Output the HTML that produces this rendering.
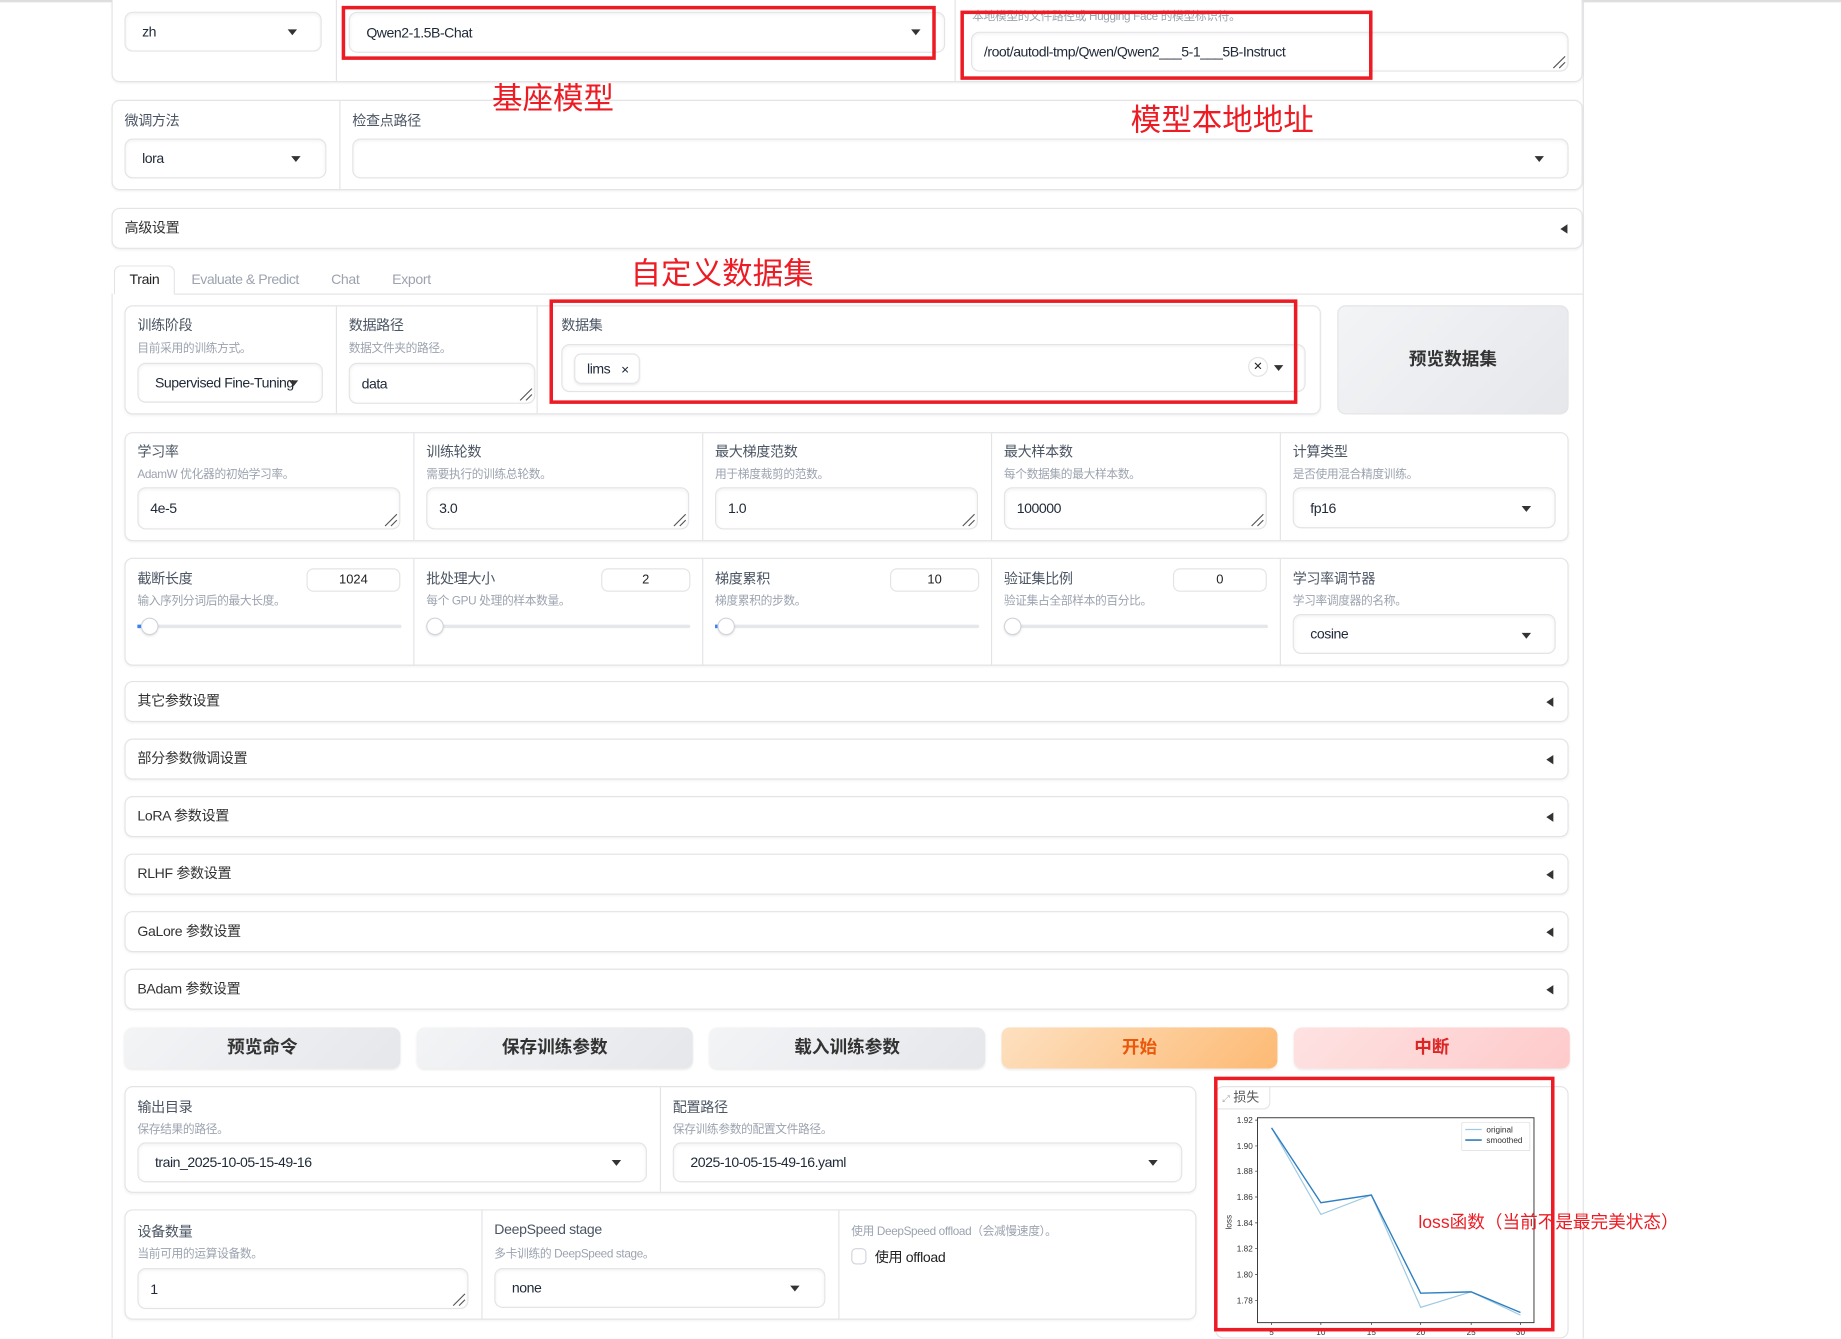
<!DOCTYPE html>
<html><head><meta charset="utf-8">
<style>
*{box-sizing:border-box;margin:0;padding:0}
html,body{width:1841px;height:1338px;overflow:hidden;background:#fff}
#w{position:absolute;left:0;top:0;width:1568px;height:1140px;transform:scale(1.17411);transform-origin:0 0;font-family:"Liberation Sans","Noto Sans CJK SC",sans-serif;color:#222}
.a{position:absolute}
.box{position:absolute;border:1px solid #e4e4e7;border-radius:7px;background:#fff;box-shadow:0 1px 2px rgba(0,0,0,.05)}
.inp{position:absolute;border:1px solid #e4e4e7;border-radius:7px;background:#fff;box-shadow:inset 0 1px 3px rgba(0,0,0,.06);font-size:12px;color:#1f2937;padding-left:14px;display:flex;align-items:center;letter-spacing:-0.4px;white-space:nowrap;overflow:hidden}
.vs{position:absolute;width:1px;background:#e4e4e7}
.lb{position:absolute;font-size:12px;color:#4b5563;white-space:nowrap;letter-spacing:-0.3px}
.sb{position:absolute;font-size:10px;color:#9ca3af;white-space:nowrap;letter-spacing:-0.3px}
.dd{position:absolute;width:0;height:0;border-left:4px solid transparent;border-right:4px solid transparent;border-top:5px solid #333}
.grip{position:absolute;width:12px;height:12px}
.acc{position:absolute;left:106px;width:1230px;height:35px;border:1px solid #e4e4e7;border-radius:7px;background:#fff;box-shadow:0 1px 2px rgba(0,0,0,.05);font-size:12px;color:#333;padding-left:10px;line-height:33px;letter-spacing:-0.3px}
.acc:after{content:"";position:absolute;right:12px;top:13px;border-top:4px solid transparent;border-bottom:4px solid transparent;border-right:6px solid #333}
.btn{position:absolute;top:875px;height:35px;width:235px;border-radius:7px;background:linear-gradient(135deg,#f3f4f6,#e5e7eb);box-shadow:0 1px 2px rgba(0,0,0,.08);font-size:15px;font-weight:bold;color:#333;text-align:center;line-height:35px}
.num{position:absolute;height:20px;width:80px;border:1px solid #e4e4e7;border-radius:6px;font-size:11px;text-align:center;line-height:18px;color:#222}
.tr{position:absolute;height:3px;background:#e5e7eb;border-radius:2px}
.th{position:absolute;width:15px;height:15px;border-radius:50%;background:#fff;border:1px solid #d1d5db;box-shadow:0 1px 2px rgba(0,0,0,.1)}
.red{position:absolute;border:3px solid #ed1c24}
.rt{position:absolute;color:#ed1c24;white-space:nowrap}
</style></head><body><div id="w">
<div class="a" style="left:0;top:0;width:1568px;height:2px;background:#dedede"></div>
<div class="vs" style="left:1348px;top:0;height:1140px"></div>
<div class="vs" style="left:95px;top:250px;height:890px"></div>

<div class="box" style="left:95px;top:-10px;width:1253px;height:80px"></div>
<div class="vs" style="left:286px;top:0;height:70px"></div>
<div class="vs" style="left:813px;top:0;height:70px"></div>
<div class="inp" style="left:106px;top:10px;width:168px;height:34px">zh</div><div class="dd" style="left:245px;top:25px"></div>
<div class="inp" style="left:297px;top:10px;width:508px;height:35px">Qwen2-1.5B-Chat</div><div class="dd" style="left:776px;top:25px"></div>
<div class="sb" style="left:828px;top:5px">本地模型的文件路径或 Hugging Face 的模型标识符。</div>
<div class="inp" style="left:827px;top:27px;width:509px;height:34px;padding-left:10px">/root/autodl-tmp/Qwen/Qwen2___5-1___5B-Instruct</div>
<svg class="grip" style="left:1322px;top:47px" viewBox="0 0 12 12"><path d="M1 11L11 1M6 11L11 6" stroke="#555" stroke-width="1"/></svg>

<div class="box" style="left:95px;top:85px;width:1253px;height:77px"></div>
<div class="vs" style="left:289px;top:86px;height:75px"></div>
<div class="lb" style="left:106px;top:94px">微调方法</div>
<div class="inp" style="left:106px;top:118px;width:172px;height:34px">lora</div><div class="dd" style="left:248px;top:133px"></div>
<div class="lb" style="left:300px;top:94px">检查点路径</div>
<div class="inp" style="left:300px;top:118px;width:1036px;height:34px"></div><div class="dd" style="left:1307px;top:133px"></div>

<div class="acc" style="left:95px;top:177px;width:1253px">高级设置</div>

<div class="a" style="left:97px;top:226px;width:52px;height:25px;border:1px solid #e4e4e7;border-bottom:1px solid #fff;border-radius:6px 6px 0 0;background:#fff;font-size:12px;text-align:center;line-height:23px;z-index:2;letter-spacing:-0.3px">Train</div>
<div class="a" style="left:148px;top:250px;width:1200px;height:1px;background:#e4e4e7"></div>
<div class="a" style="left:163px;top:231px;font-size:12px;color:#9ca3af;letter-spacing:-0.4px">Evaluate &amp; Predict</div>
<div class="a" style="left:282px;top:231px;font-size:12px;color:#9ca3af;letter-spacing:-0.3px">Chat</div>
<div class="a" style="left:334px;top:231px;font-size:12px;color:#9ca3af;letter-spacing:-0.3px">Export</div>

<div class="box" style="left:106px;top:260px;width:1019px;height:93px"></div>
<div class="vs" style="left:286px;top:261px;height:91px"></div>
<div class="vs" style="left:457px;top:261px;height:91px"></div>
<div class="lb" style="left:117px;top:268px">训练阶段</div><div class="sb" style="left:117px;top:288px">目前采用的训练方式。</div>
<div class="inp" style="left:117px;top:309px;width:158px;height:34px">Supervised Fine-Tuning</div><div class="dd" style="left:246px;top:324px"></div>
<div class="lb" style="left:297px;top:268px">数据路径</div><div class="sb" style="left:297px;top:288px">数据文件夹的路径。</div>
<div class="inp" style="left:297px;top:309px;width:159px;height:35px;padding-left:10px">data</div>
<svg class="grip" style="left:442px;top:330px" viewBox="0 0 12 12"><path d="M1 11L11 1M6 11L11 6" stroke="#555"/></svg>
<div class="lb" style="left:478px;top:268px">数据集</div>
<div class="inp" style="left:478px;top:293px;width:634px;height:41px;padding-left:10px"><span style="border:1px solid #e4e4e7;border-radius:6px;padding:5px 8px 5px 10px;box-shadow:0 1px 2px rgba(0,0,0,.08)">lims <span style="font-size:9px;margin-left:6px">✕</span></span></div>
<div class="a" style="left:1063px;top:304px;width:17px;height:17px;border:1px solid #e4e4e7;border-radius:50%;font-size:10px;text-align:center;line-height:15px">✕</div>
<div class="dd" style="left:1085px;top:311px"></div>
<div class="a" style="left:1139px;top:260px;width:197px;height:93px;border-radius:7px;background:linear-gradient(135deg,#f3f4f6,#e5e7eb);border:1px solid #e4e4e7;font-size:15px;font-weight:bold;color:#333;text-align:center;line-height:91px">预览数据集</div>

<div class="box" style="left:106px;top:368px;width:1230px;height:93px"></div>
<div class="vs" style="left:352px;top:369px;height:91px"></div><div class="vs" style="left:598px;top:369px;height:91px"></div><div class="vs" style="left:844px;top:369px;height:91px"></div><div class="vs" style="left:1090px;top:369px;height:91px"></div>
<div class="lb" style="left:117px;top:376px">学习率</div><div class="sb" style="left:117px;top:395px">AdamW 优化器的初始学习率。</div>
<div class="inp" style="left:117px;top:415px;width:224px;height:36px;padding-left:10px">4e-5</div>
<div class="lb" style="left:363px;top:376px">训练轮数</div><div class="sb" style="left:363px;top:395px">需要执行的训练总轮数。</div>
<div class="inp" style="left:363px;top:415px;width:224px;height:36px;padding-left:10px">3.0</div>
<div class="lb" style="left:609px;top:376px">最大梯度范数</div><div class="sb" style="left:609px;top:395px">用于梯度裁剪的范数。</div>
<div class="inp" style="left:609px;top:415px;width:224px;height:36px;padding-left:10px">1.0</div>
<div class="lb" style="left:855px;top:376px">最大样本数</div><div class="sb" style="left:855px;top:395px">每个数据集的最大样本数。</div>
<div class="inp" style="left:855px;top:415px;width:224px;height:36px;padding-left:10px">100000</div>
<svg class="grip" style="left:327px;top:437px" viewBox="0 0 12 12"><path d="M1 11L11 1M6 11L11 6" stroke="#555"/></svg>
<svg class="grip" style="left:573px;top:437px" viewBox="0 0 12 12"><path d="M1 11L11 1M6 11L11 6" stroke="#555"/></svg>
<svg class="grip" style="left:819px;top:437px" viewBox="0 0 12 12"><path d="M1 11L11 1M6 11L11 6" stroke="#555"/></svg>
<svg class="grip" style="left:1065px;top:437px" viewBox="0 0 12 12"><path d="M1 11L11 1M6 11L11 6" stroke="#555"/></svg>
<div class="lb" style="left:1101px;top:376px">计算类型</div><div class="sb" style="left:1101px;top:395px">是否使用混合精度训练。</div>
<div class="inp" style="left:1101px;top:415px;width:224px;height:35px">fp16</div><div class="dd" style="left:1296px;top:431px"></div>

<div class="box" style="left:106px;top:475px;width:1230px;height:92px"></div>
<div class="vs" style="left:352px;top:476px;height:90px"></div><div class="vs" style="left:598px;top:476px;height:90px"></div><div class="vs" style="left:844px;top:476px;height:90px"></div><div class="vs" style="left:1090px;top:476px;height:90px"></div>
<div class="lb" style="left:117px;top:484px">截断长度</div><div class="num" style="left:261px;top:484px">1024</div><div class="sb" style="left:117px;top:503px">输入序列分词后的最大长度。</div>
<div class="tr" style="left:117px;top:532px;width:225px"></div><div class="a" style="left:117px;top:532px;width:5px;height:3px;background:#3b82f6"></div><div class="th" style="left:120px;top:526px"></div>
<div class="lb" style="left:363px;top:484px">批处理大小</div><div class="num" style="left:512px;top:484px;width:76px">2</div><div class="sb" style="left:363px;top:503px">每个 GPU 处理的样本数量。</div>
<div class="tr" style="left:363px;top:532px;width:225px"></div><div class="th" style="left:363px;top:526px"></div>
<div class="lb" style="left:609px;top:484px">梯度累积</div><div class="num" style="left:758px;top:484px;width:76px">10</div><div class="sb" style="left:609px;top:503px">梯度累积的步数。</div>
<div class="tr" style="left:609px;top:532px;width:225px"></div><div class="a" style="left:609px;top:532px;width:4px;height:3px;background:#3b82f6"></div><div class="th" style="left:611px;top:526px"></div>
<div class="lb" style="left:855px;top:484px">验证集比例</div><div class="num" style="left:999px;top:484px">0</div><div class="sb" style="left:855px;top:503px">验证集占全部样本的百分比。</div>
<div class="tr" style="left:855px;top:532px;width:225px"></div><div class="th" style="left:855px;top:526px"></div>
<div class="lb" style="left:1101px;top:484px">学习率调节器</div><div class="sb" style="left:1101px;top:503px">学习率调度器的名称。</div>
<div class="inp" style="left:1101px;top:523px;width:224px;height:34px">cosine</div><div class="dd" style="left:1296px;top:539px"></div>

<div class="acc" style="top:580px">其它参数设置</div>
<div class="acc" style="top:629px">部分参数微调设置</div>
<div class="acc" style="top:678px">LoRA 参数设置</div>
<div class="acc" style="top:727px">RLHF 参数设置</div>
<div class="acc" style="top:776px">GaLore 参数设置</div>
<div class="acc" style="top:825px">BAdam 参数设置</div>

<div class="btn" style="left:106px">预览命令</div>
<div class="btn" style="left:355px">保存训练参数</div>
<div class="btn" style="left:604px">载入训练参数</div>
<div class="btn" style="left:853px;background:linear-gradient(135deg,#fde0c0,#fdba74);color:#ea580c">开始</div>
<div class="btn" style="left:1102px;background:linear-gradient(135deg,#fee2e2,#fecaca);color:#dc2626">中断</div>

<div class="box" style="left:106px;top:925px;width:913px;height:91px"></div>
<div class="vs" style="left:562px;top:926px;height:89px"></div>
<div class="lb" style="left:117px;top:934px">输出目录</div><div class="sb" style="left:117px;top:953px">保存结果的路径。</div>
<div class="inp" style="left:117px;top:973px;width:434px;height:34px">train_2025-10-05-15-49-16</div><div class="dd" style="left:521px;top:988px"></div>
<div class="lb" style="left:573px;top:934px">配置路径</div><div class="sb" style="left:573px;top:953px">保存训练参数的配置文件路径。</div>
<div class="inp" style="left:573px;top:973px;width:434px;height:34px">2025-10-05-15-49-16.yaml</div><div class="dd" style="left:978px;top:988px"></div>

<div class="box" style="left:106px;top:1030px;width:913px;height:94px"></div>
<div class="vs" style="left:410px;top:1031px;height:92px"></div><div class="vs" style="left:714px;top:1031px;height:92px"></div>
<div class="lb" style="left:117px;top:1040px">设备数量</div><div class="sb" style="left:117px;top:1059px">当前可用的运算设备数。</div>
<div class="inp" style="left:117px;top:1080px;width:282px;height:35px;padding-left:10px">1</div>
<svg class="grip" style="left:385px;top:1101px" viewBox="0 0 12 12"><path d="M1 11L11 1M6 11L11 6" stroke="#555"/></svg>
<div class="lb" style="left:421px;top:1040px">DeepSpeed stage</div><div class="sb" style="left:421px;top:1059px">多卡训练的 DeepSpeed stage。</div>
<div class="inp" style="left:421px;top:1080px;width:282px;height:34px">none</div><div class="dd" style="left:673px;top:1095px"></div>
<div class="sb" style="left:725px;top:1040px">使用 DeepSpeed offload（会减慢速度）。</div>
<div class="a" style="left:725px;top:1063px;width:13px;height:14px;border:1px solid #d1d5db;border-radius:4px"></div>
<div class="a" style="left:745px;top:1062px;font-size:12px;color:#222;letter-spacing:-0.3px">使用 offload</div>

<div class="box" style="left:1035px;top:925px;width:301px;height:215px;box-shadow:none"></div>
<div class="a" style="left:1036px;top:925px;width:46px;height:20px;border-right:1px solid #e4e4e7;border-bottom:1px solid #e4e4e7;border-radius:0 0 6px 0;font-size:11px;color:#555;line-height:20px;padding-left:5px"><span style="font-size:8px;color:#aaa">⤢</span> 损失</div>
<svg class="a" style="left:1035px;top:945px" width="300" height="195" viewBox="1035 945 300 195">
<rect x="1071" y="952" width="235.5" height="174.5" fill="none" stroke="#333" stroke-width="0.8"/>
<g font-family="Liberation Sans" font-size="7" fill="#333" text-anchor="end">
<text x="1067" y="956.5">1.92</text><text x="1067" y="978.5">1.90</text><text x="1067" y="1000">1.88</text><text x="1067" y="1022">1.86</text><text x="1067" y="1044">1.84</text><text x="1067" y="1066">1.82</text><text x="1067" y="1088">1.80</text><text x="1067" y="1110">1.78</text>
</g>
<g stroke="#333" stroke-width="0.6"><path d="M1069 954h2M1069 976h2M1069 997.5h2M1069 1019.5h2M1069 1041.5h2M1069 1063.5h2M1069 1085.5h2M1069 1107.5h2M1083 1126.5v2M1125 1126.5v2M1168 1126.5v2M1210 1126.5v2M1253 1126.5v2M1295 1126.5v2"/></g>
<g font-family="Liberation Sans" font-size="7" fill="#333" text-anchor="middle"><text x="1083" y="1137">5</text><text x="1125" y="1137">10</text><text x="1168" y="1137">15</text><text x="1210" y="1137">20</text><text x="1253" y="1137">25</text><text x="1295" y="1137">30</text></g>
<text x="1049" y="1041" font-family="Liberation Sans" font-size="7" fill="#333" transform="rotate(-90 1049 1041)" text-anchor="middle">loss</text>
<polyline points="1083,960.6 1125,1034.3 1168,1017.8 1210,1113.5 1253,1100.3 1295,1120.1" fill="none" stroke="#9ecae1" stroke-width="1"/>
<polyline points="1083,960.6 1125,1024.4 1168,1017.8 1210,1101.4 1253,1100.3 1295,1117.9" fill="none" stroke="#2f7fc1" stroke-width="1.2"/>
<rect x="1245" y="956" width="58" height="24" fill="#fff" stroke="#ddd" stroke-width="0.6" rx="1"/>
<path d="M1248 962h14" stroke="#9ecae1"/><path d="M1248 971h14" stroke="#2f7fc1" stroke-width="1.3"/>
<g font-family="Liberation Sans" font-size="7" fill="#333"><text x="1266" y="964.5">original</text><text x="1266" y="973.5">smoothed</text></g>
</svg>

<div class="red" style="left:291px;top:5px;width:506px;height:46px"></div>
<div class="red" style="left:818px;top:9px;width:351px;height:59px"></div>
<div class="red" style="left:468px;top:255px;width:637px;height:89px"></div>
<div class="red" style="left:1034px;top:917px;width:290px;height:217px"></div>
<div class="rt" style="left:419px;top:64px;font-size:26px">基座模型</div>
<div class="rt" style="left:963px;top:82px;font-size:26px">模型本地地址</div>
<div class="rt" style="left:537px;top:213px;font-size:26px">自定义数据集</div>
<div class="rt" style="left:1208px;top:1030px;font-size:15px">loss函数（当前不是最完美状态）</div>
</div></body></html>
